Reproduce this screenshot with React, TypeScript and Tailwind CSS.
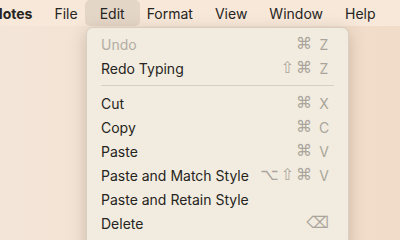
import React from "react";

const menus = ["File", "Edit", "Format", "View", "Window", "Help"];

type Item = { label: string; keys?: string[]; disabled?: boolean; sep?: boolean };

const items: Item[] = [
  { label: "Undo", keys: ["⌘", "Z"], disabled: true },
  { label: "Redo Typing", keys: ["⇧", "⌘", "Z"] },
  { label: "", sep: true },
  { label: "Cut", keys: ["⌘", "X"] },
  { label: "Copy", keys: ["⌘", "C"] },
  { label: "Paste", keys: ["⌘", "V"] },
  { label: "Paste and Match Style", keys: ["⌥", "⇧", "⌘", "V"] },
  { label: "Paste and Retain Style" },
  { label: "Delete", keys: ["⌫"] },
];

function Keys({ keys }: { keys: string[] }) {
  return (
    <span className="flex items-center gap-[2px] text-[#aaa59c]">
      {keys.map((k, i) =>
        /^[A-Z]$/.test(k) ? (
          <span key={i} className="ml-[5px] w-[10px] text-center text-[14px]">
            {k}
          </span>
        ) : (
          <span key={i} className="text-[16px] leading-none font-['DejaVu_Sans',sans-serif]">
            {k}
          </span>
        )
      )}
    </span>
  );
}

export default function App() {
  return (
    <div className="relative h-[240px] w-[400px] overflow-hidden bg-gradient-to-r from-[#f3e5d8] to-[#f1dcc9] font-['Inter',sans-serif] text-[#262421]">
      {/* menu bar */}
      <div className="flex h-[26px] items-center whitespace-nowrap bg-[#f7e8da] text-[14px]">
        <span className="-ml-[8px] pr-[11px] font-bold">Notes</span>
        {menus.map((m) =>
          m === "Edit" ? (
            <span
              key={m}
              className="-mx-[4px] flex h-[26px] items-center rounded-[5px] bg-[#e4d6c7] px-[15px]"
            >
              {m}
            </span>
          ) : (
            <span key={m} className="flex h-[26px] items-center px-[11px]">
              {m}
            </span>
          )
        )}
      </div>

      {/* dropdown */}
      <div className="absolute left-[86px] top-[27px] w-[263px] rounded-t-[7px] border border-[#d9d0c2] bg-[#f2ece0] pb-[12px] pt-[4px] shadow-[0_4px_16px_rgba(90,60,30,0.25)]">
        {items.map((it, i) =>
          it.sep ? (
            <div key={i} className="mx-[14px] my-[5px] h-px bg-[#d6cfc4]" />
          ) : (
            <div
              key={i}
              className={`flex h-[24px] items-center justify-between pl-[14px] pr-[19px] text-[14px] ${
                it.disabled ? "text-[#b2ada4]" : ""
              }`}
            >
              <span>{it.label}</span>
              {it.keys && <Keys keys={it.keys} />}
            </div>
          )
        )}
      </div>
    </div>
  );
}
